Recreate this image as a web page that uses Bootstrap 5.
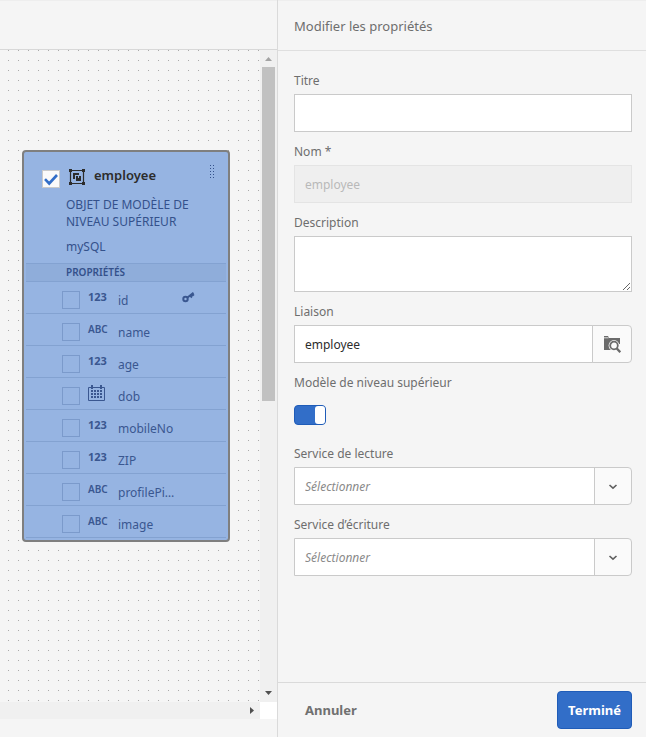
<!DOCTYPE html>
<html lang="fr">
<head>
<meta charset="utf-8">
<meta name="viewport" content="width=device-width, initial-scale=1">
<title>Modifier les propriétés</title>
<link href="https://cdn.jsdelivr.net/npm/bootstrap@5.3.0/dist/css/bootstrap.min.css" rel="stylesheet">
<style>
  body { font-family: "Noto Sans", "Open Sans", sans-serif; font-size: 12px; line-height: 20px; color: #6e6e6e; background: #f5f5f5; }
  .topbar { height: 50px; border-top: 1px solid #eee; border-bottom: 1px solid #d8d8d8; }
  .canvas { padding: 100px 30px 0 22px; background: conic-gradient(at 1px 1px, transparent 75%, #aaa 0) 8px 0 / 10px 10px; }
  .bar-v, .bar-h { background: #f0f0f0; }
  .bar-v { width: 17px; }
  .bar-h { height: 17px; }
  .bar-end { width: 17px; height: 17px; }
  .bar-thumb { width: 13px; height: 54%; background: #c1c1c1; }
  .lower-gap { height: 18px; }

  .model { background: #96b4e2; border: 2px solid #7f7f7f; border-radius: 4px; color: #34518b; padding: 0 2px 2px; }
  .model-head { padding: 13px 12px 0 16px; }
  .model-head .tick { margin-top: 5px; }
  .model-icon { margin: 3px 0 0 8px; }
  .model-title { font-size: 13px; color: #2c2c2c; }
  .model-text { padding: 8px 16px 0 40px; line-height: 17px; }
  .model-section { font-size: 10px; line-height: 17px; padding-left: 40px; background: #8fadda; border-top: 1px solid #83a2d1; border-bottom: 1px solid #83a2d1; }
  .prop-row { height: 32px; padding-left: 36px; border-bottom: 1px solid #83a2d1; color: #3a5790; }
  .tick { width: 18px; height: 18px; margin: 0; border-radius: 0 !important; border: 1px solid #7b9acb; background-color: transparent; }
  .tick:checked { background-color: #fafafa; border-color: #cacaca; background-size: 16px; background-image: url("data:image/svg+xml,%3Csvg xmlns='http://www.w3.org/2000/svg' viewBox='0 0 16 16'%3E%3Cpath d='M2 8.2l4.2 4.3L14 4' fill='none' stroke='%23326ec8' stroke-width='2.6'/%3E%3C/svg%3E"); }
  .kind { width: 38px; padding-left: 8px; font-size: 11px; line-height: 16px; }
  .kind-num { padding-bottom: 2px; }
  .kind-abc { font-size: 10px; padding-bottom: 2px; }
  .prop-name { padding-top: 6px; }
  .key-slot { padding: 0 31px 2px 0; }

  .props-panel { flex: 0 0 369px; border-left: 1px solid #dadada; }
  .panel-head { height: 51px; padding: 0 16px; border-top: 1px solid #eee; border-bottom: 1px solid #dfdfdf; font-size: 13px; }
  .panel-form { padding: 20px 14px 0 16px; }
  .field { margin-bottom: 10px; }
  .field-label { display: block; margin-bottom: 3px; }
  .form-control, .form-select { height: 38px; padding: 0 10px; font-size: 12px; line-height: 20px; border: 1px solid #cacaca; border-radius: 0; color: #2c2c2c; }
  .form-control:disabled { background: #efefef; border-color: #e4e4e4; color: #b9b9b9; }
  textarea.form-control { height: 56px; min-height: 56px; }
  .picker { width: 40px; padding: 0; background: #fafafa; border: 1px solid #cacaca; border-radius: 0 4px 4px 0; }
  .form-select { font-style: italic; color: #8a8a8a; padding-top: 2px; border-radius: 0 4px 4px 0;
    background-image: url("data:image/svg+xml,%3Csvg xmlns='http://www.w3.org/2000/svg' viewBox='0 0 10 6'%3E%3Cpath d='M1.5 1L5 4.2 8.500 1' fill='none' stroke='%23606060' stroke-width='1.6'/%3E%3C/svg%3E"), linear-gradient(#cacaca, #cacaca), linear-gradient(#fafafa, #fafafa);
    background-size: 10px 6px, 1px 100%, 36px 100%; background-position: right 13px top 16px, right 36px top, right top; background-repeat: no-repeat; }
  .switch-line { height: 38px; }
  .level-switch { position: relative; width: 32px; height: 20px; margin: 0; border-radius: 4px; appearance: none; border: 1px solid #1f5cb8; background: #b0b0b0; display: flex; }
  .level-switch::before { content: ""; width: 10px; border-radius: 3px; background: #fff; }
  .level-switch:checked { background: #326ec8; justify-content: flex-end; }
  .panel-foot { padding: 8px 14px 8px 16px; border-top: 1px solid #dadada; }
  .panel-foot .btn { height: 38px; padding: 0 10px; font-size: 13px; line-height: 20px; font-weight: 700; border-radius: 4px; color: #707070; }
  .panel-foot .btn-primary { background: #326ec8; border-color: #1f5cb8; color: #fff; }
</style>
</head>
<body>
<div class="d-flex vh-100 overflow-hidden">
  <main class="d-flex flex-column flex-fill">
    <div class="topbar flex-shrink-0"></div>
    <div class="d-flex flex-fill overflow-hidden">
      <div class="canvas flex-fill">
        <section class="model">
          <div class="model-head d-flex align-items-start">
            <input class="form-check-input tick" type="checkbox" id="model" checked>
            <svg class="model-icon" width="18" height="18" viewBox="0 0 18 18" aria-hidden="true">
              <path d="M2.500 2.500h13v13h-13z" fill="none" stroke="#2c2c2c" stroke-width="1.200"/>
              <path d="M1 1h3v3H1zM14 1h3v3h-3zM1 14h3v3H1zM14 14h3v3h-3zM5 5h6v2H7v4H5zM8 8h2v2h1V8h2v5H8z" fill="#2c2c2c"/>
            </svg>
            <label class="model-title fw-semibold ms-2 flex-fill" for="model">employee</label>
            <svg width="4" height="14" viewBox="0 0 4 14" aria-hidden="true"><path d="M.5 0v14M3.500 0v14" stroke="#34518b" stroke-dasharray="1 2"/></svg>
          </div>
          <div class="model-text">OBJET DE MODÈLE DE NIVEAU SUPÉRIEUR</div>
          <div class="model-text mb-2">mySQL</div>
          <div class="model-section fw-semibold">PROPRIÉTÉS</div>
          <div class="prop-row d-flex align-items-center">
            <input class="form-check-input tick mt-1" type="checkbox" id="p1">
            <span class="kind kind-num fw-bold">123</span><label class="prop-name flex-fill" for="p1">id</label>
            <span class="key-slot d-flex"><svg width="13" height="12" viewBox="0 0 13 12" aria-hidden="true"><circle cx="3.500" cy="8" r="2.200" fill="none" stroke="#3a5790" stroke-width="2"/><path d="M5.500 6.500L11.500 1.800M8.200 4.500l1.800 2M10.300 2.800l1.500 1.800" stroke="#3a5790" stroke-width="2" fill="none"/></svg></span>
          </div>
          <div class="prop-row d-flex align-items-center">
            <input class="form-check-input tick mt-1" type="checkbox" id="p2">
            <span class="kind kind-abc fw-semibold">ABC</span><label class="prop-name" for="p2">name</label>
          </div>
          <div class="prop-row d-flex align-items-center">
            <input class="form-check-input tick mt-1" type="checkbox" id="p3">
            <span class="kind kind-num fw-bold">123</span><label class="prop-name" for="p3">age</label>
          </div>
          <div class="prop-row d-flex align-items-center">
            <input class="form-check-input tick mt-1" type="checkbox" id="p4">
            <span class="kind d-flex"><svg width="17" height="17" viewBox="0 0 17 17" aria-hidden="true"><path d="M.5 2.500h16v13H.5z" fill="none" stroke="#3a5790"/><path d="M4 0v4M13 0v4" stroke="#3a5790" stroke-width="2"/><path d="M3 6h11M3 9h11M3 12h11" stroke="#3a5790" stroke-width="2" stroke-dasharray="2 1"/></svg></span><label class="prop-name" for="p4">dob</label>
          </div>
          <div class="prop-row d-flex align-items-center">
            <input class="form-check-input tick mt-1" type="checkbox" id="p5">
            <span class="kind kind-num fw-bold">123</span><label class="prop-name" for="p5">mobileNo</label>
          </div>
          <div class="prop-row d-flex align-items-center">
            <input class="form-check-input tick mt-1" type="checkbox" id="p6">
            <span class="kind kind-num fw-bold">123</span><label class="prop-name" for="p6">ZIP</label>
          </div>
          <div class="prop-row d-flex align-items-center">
            <input class="form-check-input tick mt-1" type="checkbox" id="p7">
            <span class="kind kind-abc fw-semibold">ABC</span><label class="prop-name" for="p7">profilePi…</label>
          </div>
          <div class="prop-row d-flex align-items-center">
            <input class="form-check-input tick mt-1" type="checkbox" id="p8">
            <span class="kind kind-abc fw-semibold">ABC</span><label class="prop-name" for="p8">image</label>
          </div>
        </section>
      </div>
      <div class="bar-v d-flex flex-column align-items-center flex-shrink-0" aria-hidden="true">
        <svg class="bar-end flex-shrink-0" viewBox="0 0 17 17"><path d="M5 11l3.500-4 3.500 4z" fill="#a3a3a3"/></svg>
        <div class="flex-fill d-flex flex-column align-items-center w-100"><div class="bar-thumb"></div></div>
        <svg class="bar-end flex-shrink-0" viewBox="0 0 17 17"><path d="M5 6l3.500 4L12 6z" fill="#505050"/></svg>
      </div>
    </div>
    <div class="d-flex flex-shrink-0" aria-hidden="true">
      <div class="bar-h flex-fill d-flex justify-content-end"><svg class="bar-end" viewBox="0 0 17 17"><path d="M7 5l4 3.500L7 12z" fill="#505050"/></svg></div>
      <div class="bar-end bg-white"></div>
    </div>
    <div class="lower-gap flex-shrink-0"></div>
  </main>

  <aside class="props-panel d-flex flex-column">
    <header class="panel-head d-flex align-items-center flex-shrink-0">Modifier les propriétés</header>
    <form class="panel-form flex-fill">
      <div class="field"><label class="field-label" for="titre">Titre</label><input class="form-control" id="titre" type="text"></div>
      <div class="field"><label class="field-label" for="nom">Nom *</label><input class="form-control" id="nom" type="text" value="employee" disabled></div>
      <div class="field"><label class="field-label" for="desc">Description</label><textarea class="form-control d-block" id="desc"></textarea></div>
      <div class="field"><label class="field-label" for="liaison">Liaison</label>
        <div class="input-group">
          <input class="form-control" id="liaison" type="text" value="employee">
          <button class="btn picker d-flex align-items-center justify-content-center" type="button" aria-label="Parcourir">
            <svg width="18" height="18" viewBox="0 0 18 18" aria-hidden="true"><path d="M1 1h4l1 2h11v12H1z" fill="#6b6b6b"/><path d="M1 2.800h4.500" stroke="#fafafa" stroke-width=".8"/><circle cx="11" cy="10.500" r="5.400" fill="#fafafa"/><path d="M11 15.500h7V9h-2z" fill="#fafafa"/><circle cx="11" cy="10.500" r="3.800" fill="none" stroke="#6b6b6b" stroke-width="1.800"/><path d="M13.600 13.200l3.700 4" stroke="#6b6b6b" stroke-width="2.400"/></svg>
          </button>
        </div>
      </div>
      <div class="field"><label class="field-label" for="niveau">Modèle de niveau supérieur</label>
        <div class="switch-line d-flex align-items-center"><input class="level-switch" id="niveau" type="checkbox" role="switch" checked></div>
      </div>
      <div class="field"><label class="field-label" for="lecture">Service de lecture</label><select class="form-select" id="lecture"><option>Sélectionner</option></select></div>
      <div class="field"><label class="field-label" for="ecriture">Service d’écriture</label><select class="form-select" id="ecriture"><option>Sélectionner</option></select></div>
    </form>
    <footer class="panel-foot d-flex justify-content-between flex-shrink-0">
      <button class="btn" type="button">Annuler</button>
      <button class="btn btn-primary" type="button">Terminé</button>
    </footer>
  </aside>
</div>
<script src="https://cdn.jsdelivr.net/npm/bootstrap@5.3.0/dist/js/bootstrap.bundle.min.js"></script>
</body>
</html>
